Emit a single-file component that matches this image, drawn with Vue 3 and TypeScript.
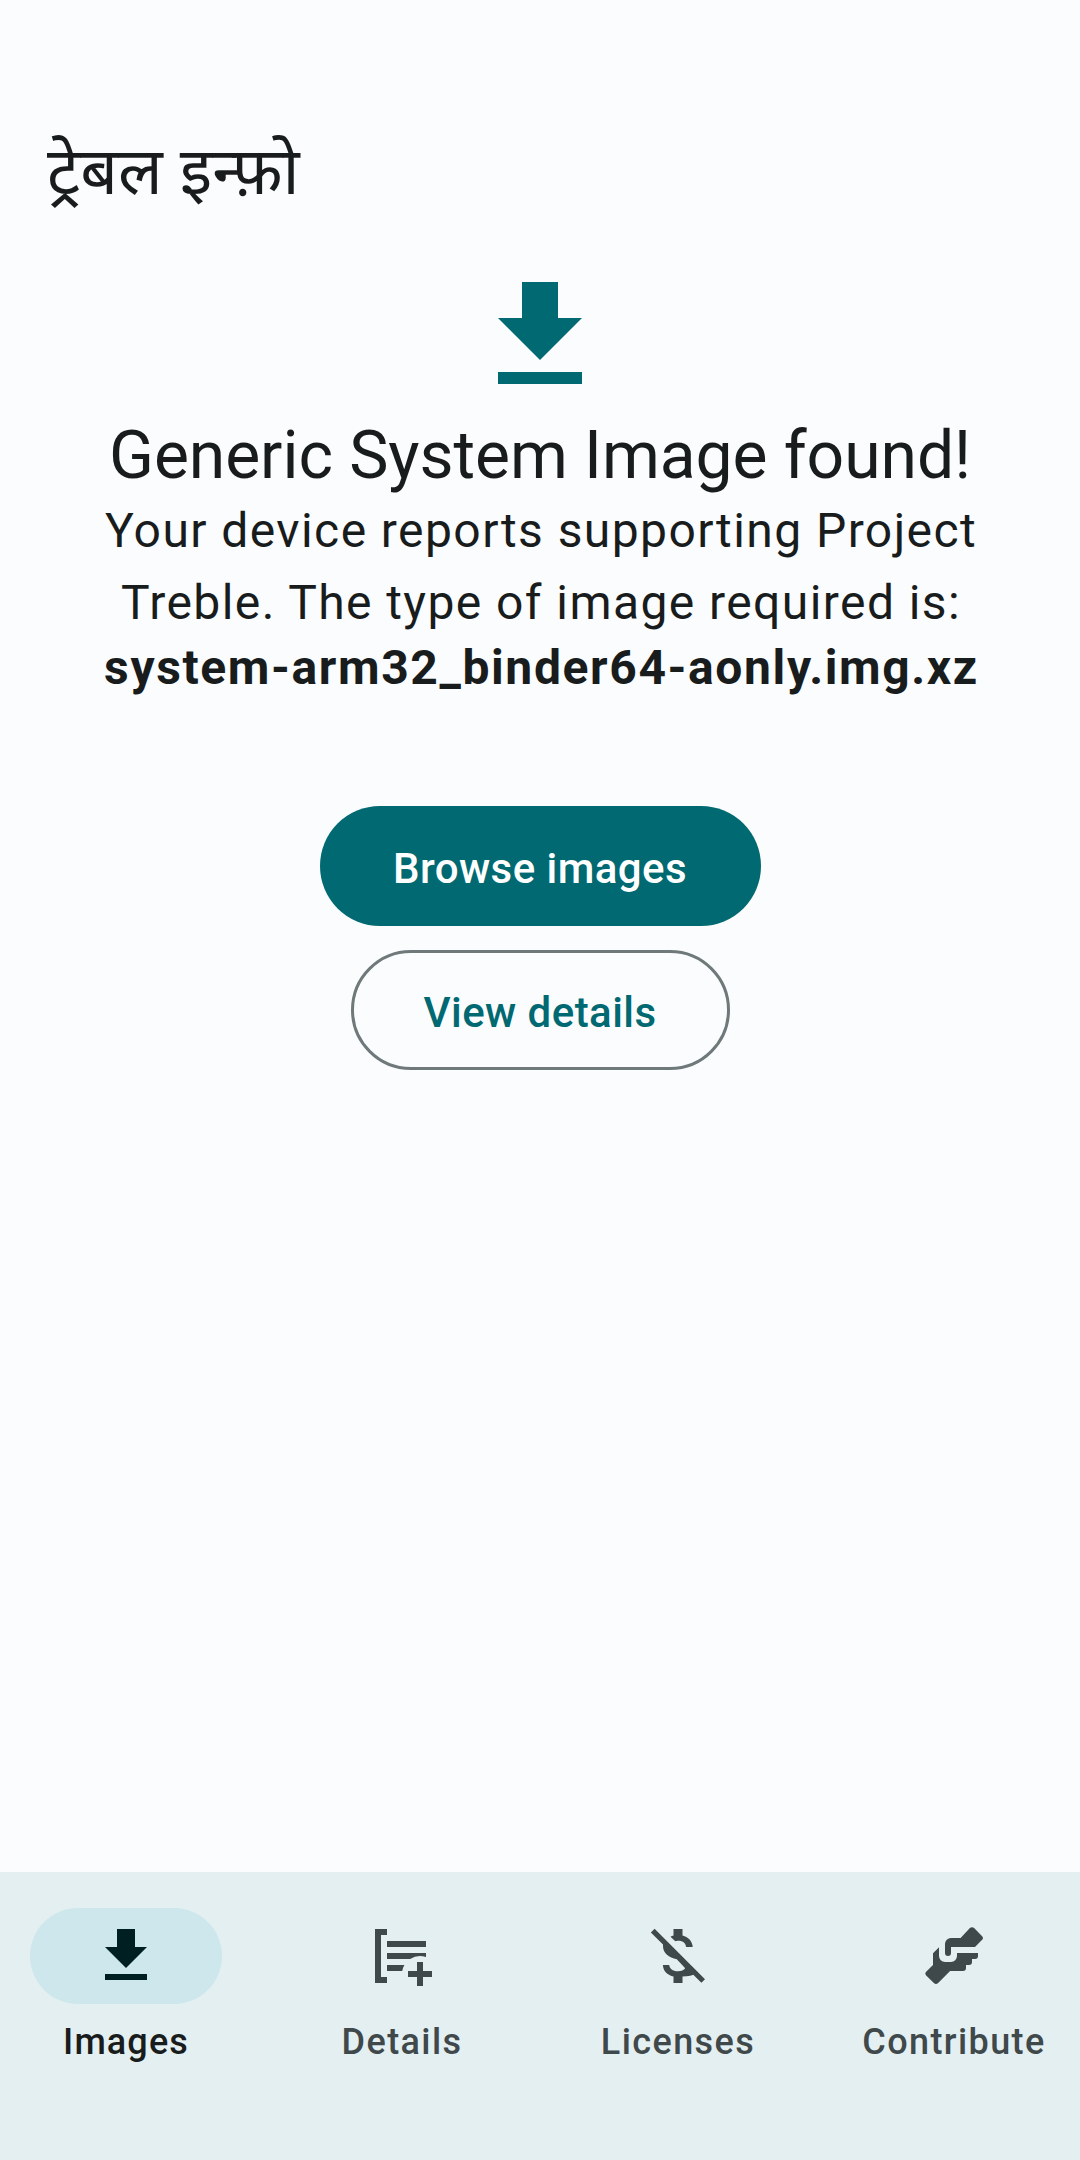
<script setup lang="ts">
interface NavItem {
  label: string
  paths: string[]
}

const downloadPath = 'M19 9h-4V3H9v6H5l7 7 7-7zM5 18v2h14v-2H5z'

const items: NavItem[] = [
  { label: 'Images', paths: [downloadPath] },
  {
    label: 'Details',
    paths: [
      'M3 3h4v2H5v14h2v2H3z',
      'M7 7h13v2H7z',
      'M7 11h13v1.34A6 6 0 0 0 14.7 13H7z',
      'M7 15h5.8A6 6 0 0 0 12.08 17H7z',
      'M17 14h2v3h3v2h-3v3h-2v-3h-3v-2h3z',
    ],
  },
  {
    label: 'Licenses',
    paths: [
      'M12 6.9c1.78 0 2.6.85 2.7 2.1h2.2c-.07-1.72-1.31-3.3-3.4-3.81V3h-3v2.16c-.4.1-.7.2-1 .4l1.6 1.5c.3-.1.5-.16.9-.16z',
      'M4.2 2.95L21 19.75 19.8 20.95 17.1 18.25C16.2 18.6 15.2 18.75 13.5 18.85V21h-3v-2.17C8.58 18.42 7.1 17.19 6.95 15h2.1c.2 1.18 1.1 2.1 2.95 2.1 1.2 0 1.9-.35 2.4-1L11.6 13.1C9 12.5 7 11.2 7 8.7V8.2L2.95 4.15z',
    ],
  },
  {
    label: 'Contribute',
    paths: [
      'M14.2 6L17.3 2.7Q18 2.05 18.7 2.7L21.3 5.3Q22 6 21.3 6.7L19 9H11v2a1 1 0 0 1-2 0V8a2 2 0 0 1 2-2z',
      'M7 9.1V12a2 2 0 0 0 2 2h2a2 2 0 0 0 2-2V11h7v1a1 1 0 0 1-1 1h-1v1a1 1 0 0 1-1 1h-1v1a1 1 0 0 1-1 1H10.7L6.7 21Q6 21.7 5.3 21L2.8 18.6Q2.1 17.9 2.8 17.2L5 15v-3.9z',
    ],
  },
]
</script>

<template>
  <div class="screen">
    <header class="toolbar" lang="hi">ट्रेबल इन्फ़ो</header>
    <main class="content">
      <svg class="hero" viewBox="0 0 24 24"><path :d="downloadPath" /></svg>
      <h1>Generic System Image found!</h1>
      <p class="body">Your device reports supporting Project<br />Treble. The type of image required is:</p>
      <p class="file">system-arm32_binder64-aonly.img.xz</p>
      <button class="btn filled">Browse images</button>
      <button class="btn outlined">View details</button>
    </main>
    <nav class="nav">
      <div v-for="(item, i) in items" :key="item.label" class="item" :class="{ active: i === 0 }">
        <span class="pill">
          <svg viewBox="0 0 24 24"><path v-for="p in item.paths" :key="p" :d="p" /></svg>
        </span>
        <span class="label">{{ item.label }}</span>
      </div>
    </nav>
  </div>
</template>

<style>
body {
  margin: 0;
  background: #fbfcfe;
}
</style>

<style scoped>
.screen {
  display: flex;
  flex-direction: column;
  width: 1080px;
  height: 2160px;
  overflow: hidden;
  background: #fbfcfe;
  color: #191c1d;
  font-family: Roboto, 'Noto Sans', 'Noto Sans Devanagari', sans-serif;
}
.toolbar {
  box-sizing: border-box;
  height: 264px;
  padding: 118px 47px 0;
  font-family: 'Noto Sans', 'Noto Sans Devanagari', sans-serif;
  font-size: 66px;
  line-height: 100px;
  white-space: nowrap;
}
.content {
  flex: 1;
  display: flex;
  flex-direction: column;
  align-items: center;
  text-align: center;
  white-space: nowrap;
}
.hero {
  width: 144px;
  height: 144px;
  fill: #006971;
}
h1 {
  margin: 6px 0 0;
  font-size: 66px;
  font-weight: 400;
  line-height: 84px;
  letter-spacing: -0.07px;
}
p {
  margin: 0;
  font-size: 48px;
}
.body {
  margin-top: -3px;
  padding-left: 2px;
  line-height: 72px;
  letter-spacing: 1.42px;
}
.file {
  margin-top: 1px;
  padding-left: 3px;
  font-weight: 700;
  line-height: 56px;
  letter-spacing: 1.61px;
}
.btn {
  box-sizing: border-box;
  height: 120px;
  padding: 6px 0 0;
  border: 0;
  border-radius: 60px;
  font: 500 42px/60px Roboto, sans-serif;
  letter-spacing: 0.45px;
}
.filled {
  width: 441px;
  margin-top: 110px;
  background: #006971;
  color: #fff;
}
.outlined {
  width: 379px;
  margin-top: 24px;
  border: 3px solid #6f797a;
  background: transparent;
  color: #006971;
}
.nav {
  display: flex;
  box-sizing: border-box;
  gap: 24px;
  height: 288px;
  padding-top: 36px;
  background: #e4eff1;
  color: #3f484a;
}
.item {
  display: flex;
  flex: 1;
  flex-direction: column;
  align-items: center;
  gap: 14px;
}
.pill {
  display: flex;
  align-items: center;
  justify-content: center;
  width: 192px;
  height: 96px;
  border-radius: 48px;
}
.pill svg {
  width: 72px;
  height: 72px;
  fill: #3f484a;
}
.label {
  font-size: 36px;
  font-weight: 500;
  line-height: 48px;
  letter-spacing: 1.4px;
}
.active {
  color: #191c1d;
}
.active .label {
  letter-spacing: 1.1px;
}
.active .pill {
  background: #cde7ec;
}
.active svg {
  fill: #001f23;
}
</style>
